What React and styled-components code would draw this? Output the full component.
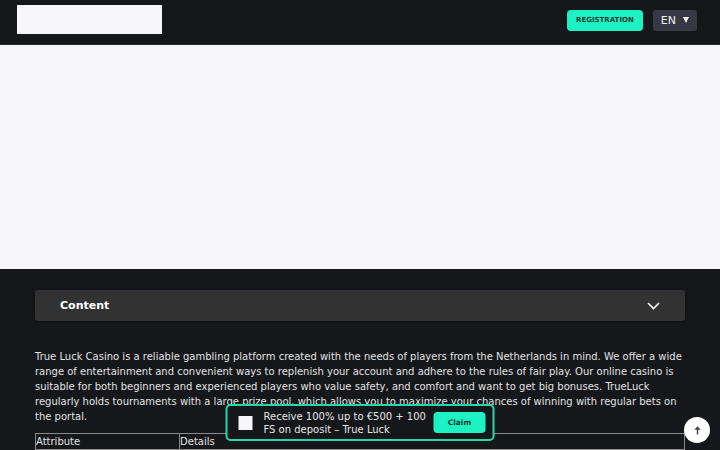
import React from 'react';
import styled, { createGlobalStyle } from 'styled-components';

const GlobalStyle = createGlobalStyle`
    body {
        margin: 0;
        background: #16171b;
        font-family: "DejaVu Sans", sans-serif;
        color: #e6e6e6;
    }
`

const Header = styled.header`
    display: flex;
    align-items: center;
    justify-content: space-between;
    height: 44px;
    padding: 0 23px 0 17px;
    background: #16171b;
    border-bottom: 1px solid #2a2b30;
`

const Logo = styled.div`
    width: 145px;
    height: 29px;
    margin-top: -5px;
    background: #f7f7f9;
`

const Actions = styled.div`
    display: flex;
    align-items: center;
    gap: 10px;
    margin-top: -4px;
`

const RegisterButton = styled.button`
    height: 21px;
    padding: 0 9px;
    border: none;
    border-radius: 4px;
    background: #1df2c2;
    color: #0e3a33;
    font-family: "DejaVu Sans", sans-serif;
    font-size: 7px;
    font-weight: bold;
    text-transform: uppercase;
    cursor: pointer;
`

const LangButton = styled.button`
    display: flex;
    align-items: center;
    gap: 7px;
    height: 21px;
    padding: 0 8px;
    border: none;
    border-radius: 3px;
    background: #363843;
    color: #f0f0f0;
    font-family: "DejaVu Sans", sans-serif;
    font-size: 11px;
    cursor: pointer;
`

const Triangle = styled.span`
    width: 0;
    height: 0;
    border-left: 3.5px solid transparent;
    border-right: 3.5px solid transparent;
    border-top: 6px solid #f0f0f0;
`

const Hero = styled.div`
    height: 224px;
    background: #f7f7f9;
`

const Main = styled.main`
    padding: 21px 35px 0;
`

const Accordion = styled.div`
    display: flex;
    align-items: center;
    justify-content: space-between;
    height: 31px;
    padding: 0 25px;
    border-radius: 3px;
    background: #323232;
    box-shadow: 0 1px 3px rgba(0, 0, 0, 0.4);
    font-size: 11px;
    font-weight: bold;
    color: #ffffff;
`

const Text = styled.p`
    margin: 28px 0 9px;
    font-size: 10px;
    line-height: 15px;
    color: #e2e2e2;
`

const Table = styled.table`
    width: 100%;
    border-collapse: collapse;
    font-size: 10px;
    line-height: 13px;
    color: #e2e2e2;

    td {
        border: 1px solid #8a8a8a;
        padding: 1px 0;
    }
`

const Promo = styled.div`
    position: fixed;
    left: 50%;
    bottom: 9px;
    transform: translateX(-50%);
    box-sizing: border-box;
    display: flex;
    align-items: center;
    width: 269px;
    height: 37px;
    padding: 0 7px 0 11px;
    border: 2px solid #1ed9a8;
    border-radius: 5px;
    background: #16171b;
`

const PromoBox = styled.span`
    flex: none;
    width: 14px;
    height: 14px;
    margin-right: 11px;
    background: #f7f7f9;
`

const PromoText = styled.span`
    flex: 1;
    font-size: 10px;
    line-height: 13px;
    color: #e6e6e6;
`

const ClaimButton = styled.button`
    flex: none;
    width: 52px;
    height: 21px;
    margin-left: 3px;
    border: none;
    border-radius: 4px;
    background: #1df2c2;
    color: #0e3a33;
    font-family: "DejaVu Sans", sans-serif;
    font-size: 7.5px;
    font-weight: bold;
    cursor: pointer;
`

const ToTop = styled.button`
    position: fixed;
    right: 10px;
    bottom: 7px;
    display: flex;
    align-items: center;
    justify-content: center;
    width: 26px;
    height: 26px;
    padding: 0;
    border: none;
    border-radius: 50%;
    background: #ffffff;
    cursor: pointer;
`

const Chevron = () => (
    <svg width="13" height="8" viewBox="0 0 13 8" fill="none">
        <path d="M1 1l5.5 5.5L12 1" stroke="#ffffff" strokeWidth="1.6" />
    </svg>
)

const ArrowUp = () => (
    <svg width="9" height="10" viewBox="0 0 9 10" fill="none">
        <path d="M4.5 9.5V3" stroke="#3d4250" strokeWidth="1.4" />
        <path d="M1.3 4.8L4.5 1.2l3.2 3.6z" fill="#3d4250" />
    </svg>
)

export default function App() {
    return (
        <>
            <GlobalStyle />
            <Header>
                <Logo />
                <Actions>
                    <RegisterButton>Registration</RegisterButton>
                    <LangButton>EN <Triangle /></LangButton>
                </Actions>
            </Header>
            <Hero />
            <Main>
                <Accordion>
                    <span>Content</span>
                    <Chevron />
                </Accordion>
                <Text>
                    True Luck Casino is a reliable gambling platform created with the needs of players from the Netherlands in mind. We offer a wide range of entertainment and convenient ways to replenish your account and adhere to the rules of fair play. Our online casino is suitable for both beginners and experienced players who value safety, and comfort and want to get big bonuses. TrueLuck regularly holds tournaments with a large prize pool, which allows you to maximize your chances of winning with regular bets on the portal.
                </Text>
                <Table>
                    <tbody>
                        <tr>
                            <td style={{ width: '22.2%' }}>Attribute</td>
                            <td>Details</td>
                        </tr>
                        <tr>
                            <td>Name</td>
                            <td>True Luck Casino</td>
                        </tr>
                    </tbody>
                </Table>
            </Main>
            <Promo>
                <PromoBox />
                <PromoText>Receive 100% up to €500 + 100 FS on deposit – True Luck</PromoText>
                <ClaimButton>Claim</ClaimButton>
            </Promo>
            <ToTop><ArrowUp /></ToTop>
        </>
    )
}
